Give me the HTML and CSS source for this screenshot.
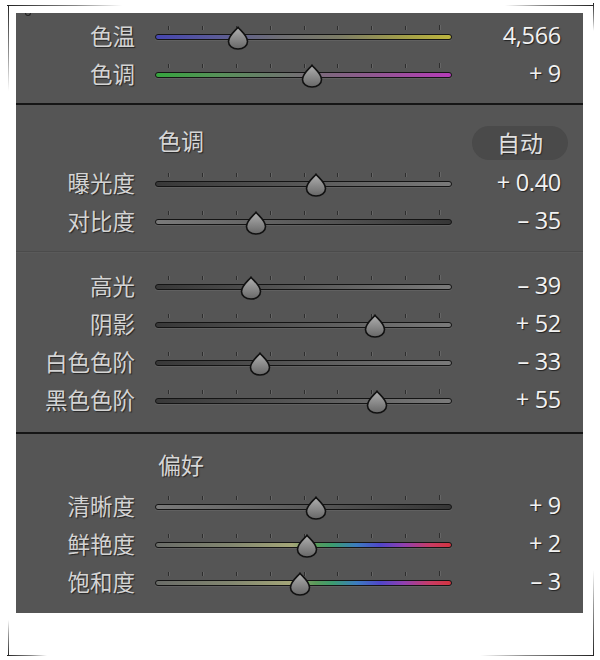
FILE: index.html
```html
<!DOCTYPE html>
<html lang="zh">
<head>
<meta charset="utf-8">
<title>基本</title>
<link rel="stylesheet" href="styles.css">
</head>
<body>
<svg class="defs" width="0" height="0" aria-hidden="true">
  <defs>
    <linearGradient id="thumbFill" x1="0" y1="0" x2="0" y2="1">
      <stop offset="0" stop-color="#b0b0b0"/>
      <stop offset="1" stop-color="#676767"/>
    </linearGradient>
  </defs>
</svg>
<div class="page">
  <i class="mark tl-h"></i><i class="mark tl-v"></i>
  <i class="mark tr-h"></i><i class="mark tr-v"></i>
  <i class="mark bl-h"></i><i class="mark bl-v"></i>
  <i class="mark br-h"></i><i class="mark br-v"></i>
  <i class="curl"></i>

  <div class="panel">
    <section class="sec sec-wb">
      <div class="row">
        <span class="label">色温</span>
        <div class="slider">
          <div class="ticks"><i></i><i></i><i></i><i></i><i></i><i></i><i></i><i></i><i></i></div>
          <div class="track temp"></div>
          <svg class="thumb" style="left:72px" viewBox="0 0 22 24"><path d="M11 1.2C13.5 4.5 20.5 9.5 20.5 15.5C20.5 20 16.5 23 11 23C5.5 23 1.5 20 1.5 15.5C1.5 9.5 8.5 4.5 11 1.2Z"/></svg>
        </div>
        <span class="value">4,566</span>
      </div>
      <div class="row">
        <span class="label">色调</span>
        <div class="slider">
          <div class="ticks"><i></i><i></i><i></i><i></i><i></i><i></i><i></i><i></i><i></i></div>
          <div class="track tint"></div>
          <svg class="thumb" style="left:146px" viewBox="0 0 22 24"><path d="M11 1.2C13.5 4.5 20.5 9.5 20.5 15.5C20.5 20 16.5 23 11 23C5.5 23 1.5 20 1.5 15.5C1.5 9.5 8.5 4.5 11 1.2Z"/></svg>
        </div>
        <span class="value">+ 9</span>
      </div>
    </section>
    <div class="sep-black"></div>

    <section class="sec sec-tone">
      <div class="row title-row">
        <span class="label"></span>
        <span class="title">色调</span>
        <span class="auto">自动</span>
      </div>
      <div class="row">
        <span class="label">曝光度</span>
        <div class="slider">
          <div class="ticks"><i></i><i></i><i></i><i></i><i></i><i></i><i></i><i></i><i></i></div>
          <div class="track dark-light"></div>
          <svg class="thumb" style="left:150px" viewBox="0 0 22 24"><path d="M11 1.2C13.5 4.5 20.5 9.5 20.5 15.5C20.5 20 16.5 23 11 23C5.5 23 1.5 20 1.5 15.5C1.5 9.5 8.5 4.5 11 1.2Z"/></svg>
        </div>
        <span class="value">+ 0.40</span>
      </div>
      <div class="row">
        <span class="label">对比度</span>
        <div class="slider">
          <div class="ticks"><i></i><i></i><i></i><i></i><i></i><i></i><i></i><i></i><i></i></div>
          <div class="track light-dark"></div>
          <svg class="thumb" style="left:90px" viewBox="0 0 22 24"><path d="M11 1.2C13.5 4.5 20.5 9.5 20.5 15.5C20.5 20 16.5 23 11 23C5.5 23 1.5 20 1.5 15.5C1.5 9.5 8.5 4.5 11 1.2Z"/></svg>
        </div>
        <span class="value">– 35</span>
      </div>
    </section>
    <div class="sep-soft"></div>

    <section class="sec sec-range">
      <div class="row">
        <span class="label">高光</span>
        <div class="slider">
          <div class="ticks"><i></i><i></i><i></i><i></i><i></i><i></i><i></i><i></i><i></i></div>
          <div class="track dark-light"></div>
          <svg class="thumb" style="left:85px" viewBox="0 0 22 24"><path d="M11 1.2C13.5 4.5 20.5 9.5 20.5 15.5C20.5 20 16.5 23 11 23C5.5 23 1.5 20 1.5 15.5C1.5 9.5 8.5 4.5 11 1.2Z"/></svg>
        </div>
        <span class="value">– 39</span>
      </div>
      <div class="row">
        <span class="label">阴影</span>
        <div class="slider">
          <div class="ticks"><i></i><i></i><i></i><i></i><i></i><i></i><i></i><i></i><i></i></div>
          <div class="track dark-light"></div>
          <svg class="thumb" style="left:209px" viewBox="0 0 22 24"><path d="M11 1.2C13.5 4.5 20.5 9.5 20.5 15.5C20.5 20 16.5 23 11 23C5.5 23 1.5 20 1.5 15.5C1.5 9.5 8.5 4.5 11 1.2Z"/></svg>
        </div>
        <span class="value">+ 52</span>
      </div>
      <div class="row">
        <span class="label">白色色阶</span>
        <div class="slider">
          <div class="ticks"><i></i><i></i><i></i><i></i><i></i><i></i><i></i><i></i><i></i></div>
          <div class="track dark-light"></div>
          <svg class="thumb" style="left:94px" viewBox="0 0 22 24"><path d="M11 1.2C13.5 4.5 20.5 9.5 20.5 15.5C20.5 20 16.5 23 11 23C5.5 23 1.5 20 1.5 15.5C1.5 9.5 8.5 4.5 11 1.2Z"/></svg>
        </div>
        <span class="value">– 33</span>
      </div>
      <div class="row">
        <span class="label">黑色色阶</span>
        <div class="slider">
          <div class="ticks"><i></i><i></i><i></i><i></i><i></i><i></i><i></i><i></i><i></i></div>
          <div class="track dark-light"></div>
          <svg class="thumb" style="left:211px" viewBox="0 0 22 24"><path d="M11 1.2C13.5 4.5 20.5 9.5 20.5 15.5C20.5 20 16.5 23 11 23C5.5 23 1.5 20 1.5 15.5C1.5 9.5 8.5 4.5 11 1.2Z"/></svg>
        </div>
        <span class="value">+ 55</span>
      </div>
    </section>
    <div class="sep-black"></div>

    <section class="sec sec-pref">
      <div class="row title-row title-row-pref">
        <span class="label"></span>
        <span class="title">偏好</span>
        <span></span>
      </div>
      <div class="row">
        <span class="label">清晰度</span>
        <div class="slider">
          <div class="ticks"><i></i><i></i><i></i><i></i><i></i><i></i><i></i><i></i><i></i></div>
          <div class="track light-dark"></div>
          <svg class="thumb" style="left:150px" viewBox="0 0 22 24"><path d="M11 1.2C13.5 4.5 20.5 9.5 20.5 15.5C20.5 20 16.5 23 11 23C5.5 23 1.5 20 1.5 15.5C1.5 9.5 8.5 4.5 11 1.2Z"/></svg>
        </div>
        <span class="value">+ 9</span>
      </div>
      <div class="row">
        <span class="label">鲜艳度</span>
        <div class="slider">
          <div class="ticks"><i></i><i></i><i></i><i></i><i></i><i></i><i></i><i></i><i></i></div>
          <div class="track spectrum"></div>
          <svg class="thumb" style="left:141px" viewBox="0 0 22 24"><path d="M11 1.2C13.5 4.5 20.5 9.5 20.5 15.5C20.5 20 16.5 23 11 23C5.5 23 1.5 20 1.5 15.5C1.5 9.5 8.5 4.5 11 1.2Z"/></svg>
        </div>
        <span class="value">+ 2</span>
      </div>
      <div class="row">
        <span class="label">饱和度</span>
        <div class="slider">
          <div class="ticks"><i></i><i></i><i></i><i></i><i></i><i></i><i></i><i></i><i></i></div>
          <div class="track spectrum"></div>
          <svg class="thumb" style="left:134px" viewBox="0 0 22 24"><path d="M11 1.2C13.5 4.5 20.5 9.5 20.5 15.5C20.5 20 16.5 23 11 23C5.5 23 1.5 20 1.5 15.5C1.5 9.5 8.5 4.5 11 1.2Z"/></svg>
        </div>
        <span class="value">– 3</span>
      </div>
    </section>
  </div>
</div>
</body>
</html>
```

FILE: styles.css
```css
* { box-sizing: border-box; }

html, body {
  margin: 0;
  padding: 0;
  background: #ffffff;
}

.defs { position: absolute; width: 0; height: 0; }

.page {
  position: relative;
  width: 600px;
  height: 660px;
  padding: 13px 0 0 16px;
  font-family: "Noto Sans CJK SC", "Noto Sans", sans-serif;
}

/* corner crop marks */
.mark { position: absolute; display: block; }
.tl-h { left: 7px; top: 5px; width: 115px; height: 1px; background: linear-gradient(to right, #222 0%, #888 60%, rgba(200,200,200,0) 100%); }
.tl-v { left: 8px; top: 5px; width: 1px; height: 86px; background: linear-gradient(to bottom, #222 0%, #999 60%, rgba(200,200,200,0) 100%); }
.tr-h { left: 505px; top: 5px; width: 89px; height: 1px; background: linear-gradient(to left, #222 0%, #888 60%, rgba(200,200,200,0) 100%); }
.tr-v { left: 593px; top: 3px; width: 1px; height: 28px; background: linear-gradient(to bottom, #222 0%, #999 60%, rgba(200,200,200,0) 100%); }
.bl-h { left: 7px; top: 655px; width: 40px; height: 1px; background: linear-gradient(to right, #222 0%, #888 60%, rgba(200,200,200,0) 100%); }
.bl-v { left: 8px; top: 620px; width: 1px; height: 36px; background: linear-gradient(to top, #222 0%, #999 60%, rgba(200,200,200,0) 100%); }
.br-h { left: 480px; top: 655px; width: 114px; height: 1px; background: linear-gradient(to left, #222 0%, #888 60%, rgba(200,200,200,0) 100%); }
.br-v { left: 593px; top: 570px; width: 1px; height: 86px; background: linear-gradient(to top, #222 0%, #999 60%, rgba(200,200,200,0) 100%); }
.curl { position: absolute; left: 25px; top: 13px; width: 6px; height: 3px; border-radius: 0 0 3px 3px; border: 1px solid #222; border-top: none; }

.panel {
  width: 567px;
  height: 600px;
  background: #555555;
  display: flex;
  flex-direction: column;
}

.sec { display: flex; flex-direction: column; }
.sec-wb { padding: 5px 0 9px; }
.sec-tone { padding: 15px 0 10px; }
.sec-range { padding: 15px 0 12px; }
.sec-pref { padding: 10px 0 0; }

.sep-black { height: 2px; background: #151515; flex: none; }
.sep-soft { height: 2px; border-top: 1px solid #4b4b4b; background: #5a5a5a; flex: none; }

.row {
  display: grid;
  grid-template-columns: 119px 297px 1fr;
  column-gap: 20px;
  height: 38px;
  align-items: center;
  padding-right: 22px;
}
.title-row { height: 45px; }
.title-row-pref { height: 44px; }

.label {
  text-align: right;
  font-size: 22.5px;
  color: #d4d4d4;
  text-shadow: 1px 1px 1px #262626;
  white-space: nowrap;
  line-height: 1;
  margin-bottom: 4px;
}

.value {
  text-align: right;
  font-family: "Open Sans", "Noto Sans", sans-serif;
  font-size: 23.5px;
  letter-spacing: -0.3px;
  color: #f2f2f2;
  text-shadow: 1px 1px 1px #222;
  line-height: 1;
  white-space: nowrap;
  margin-bottom: 2px;
}

.title {
  padding-left: 3px;
  font-size: 23px;
  color: #d6d6d6;
  text-shadow: 1px 1px 1px #262626;
  line-height: 1;
  margin-bottom: 4px;
}

.auto {
  justify-self: end;
  margin-right: -6px;
  width: 96px;
  height: 34px;
  border-radius: 17px;
  background: #4a4a4a;
  color: #e0e0e0;
  font-size: 23px;
  line-height: 32px;
  text-align: center;
  text-shadow: 1px 1px 1px #2a2a2a;
}

/* slider */
.slider {
  position: relative;
  align-self: start;
  margin-top: 8px;
  display: flex;
  flex-direction: column;
  gap: 4px;
  height: 24px;
}

.ticks {
  height: 4px;
  display: flex;
  justify-content: space-between;
  padding: 0 12px 0 13px;
}
.ticks i {
  display: block;
  width: 1px;
  height: 4px;
  background: #2e2e2e;
  box-shadow: 1px 0 0 #666;
}
.ticks i:last-child { height: 5px; margin-top: -1px; }

.track {
  height: 6px;
  border-radius: 3px;
  border: 1px solid #141414;
  box-shadow: 0 1px 0 #606060;
}
.track.temp { background: linear-gradient(to right, #4646b0 0%, #5a5a98 20%, #6e6e74 42%, #7c7c66 62%, #a4a048 85%, #bcb43e 100%); }
.track.tint { background: linear-gradient(to right, #36a43e 0%, #58905a 22%, #727072 48%, #8e5a8e 72%, #b63cb8 100%); }
.track.dark-light { background: linear-gradient(to right, #383838 0%, #555 45%, #7a7a7a 100%); }
.track.light-dark { background: linear-gradient(to right, #7a7a7a 0%, #5a5a5a 50%, #363636 100%); }
.track.spectrum { background: linear-gradient(to right, #6a6c68 0%, #828670 25%, #a4a678 46%, #5a9a5a 54%, #3c9c70 60%, #3c7cc0 68%, #5046c8 76%, #9040b0 84%, #c83c64 93%, #d23440 100%); }

.thumb {
  position: absolute;
  top: 0;
  width: 22px;
  height: 24px;
}
.thumb path {
  fill: url(#thumbFill);
  stroke: #111;
  stroke-width: 1.6;
}
```
